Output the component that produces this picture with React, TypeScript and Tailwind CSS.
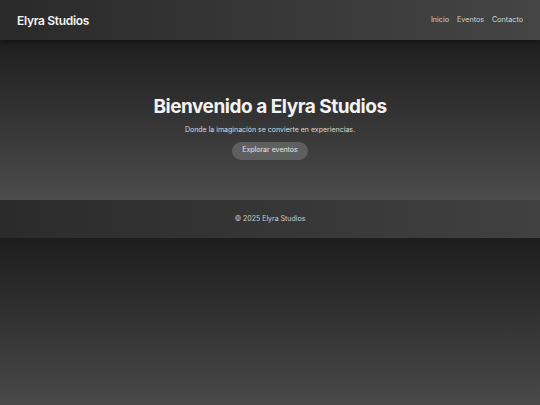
import React from 'react';

const navLinks = ['Inicio', 'Eventos', 'Contacto'];

export default function App() {
  return (
    <div className="flex min-h-[405px] flex-col bg-[#1e1e1e] font-['Inter','Open_Sans',sans-serif] text-[#f2f2f2]">
      <header className="relative z-10 flex h-10 items-center justify-between bg-gradient-to-r from-[#2a2a2a] to-[#454545] px-[17px] shadow-[0_2px_6px_rgba(0,0,0,0.45)]">
        <h1 className="pt-px text-[12px] font-semibold tracking-tight">Elyra Studios</h1>
        <nav className="flex gap-2 pt-px text-[7.2px] text-[#d4d4d4]">
          {navLinks.map(link => (
            <a key={link} href="#">{link}</a>
          ))}
        </nav>
      </header>

      <section className="flex h-40 flex-col items-center justify-center bg-gradient-to-b from-[#1f1f1f] to-[#4c4c4c] pt-[12px]">
        <h2 className="text-[19px] font-bold tracking-tight">Bienvenido a Elyra Studios</h2>
        <p className="mt-[4px] text-[7px] text-[#dcdcdc]">Donde la imaginación se convierte en experiencias.</p>
        <button className="mt-[6px] h-[18px] w-[76px] rounded-full bg-[#5f5f5f] text-[7px] text-[#e6e6e6]">
          Explorar eventos
        </button>
      </section>

      <footer className="flex h-[38px] items-center justify-center bg-gradient-to-r from-[#2b2b2b] to-[#414141] text-[7px] text-[#cfcfcf]">
        © 2025 Elyra Studios
      </footer>

      <div className="flex-1 bg-gradient-to-b from-[#1e1e1e] to-[#494949]" />
    </div>
  );
}
